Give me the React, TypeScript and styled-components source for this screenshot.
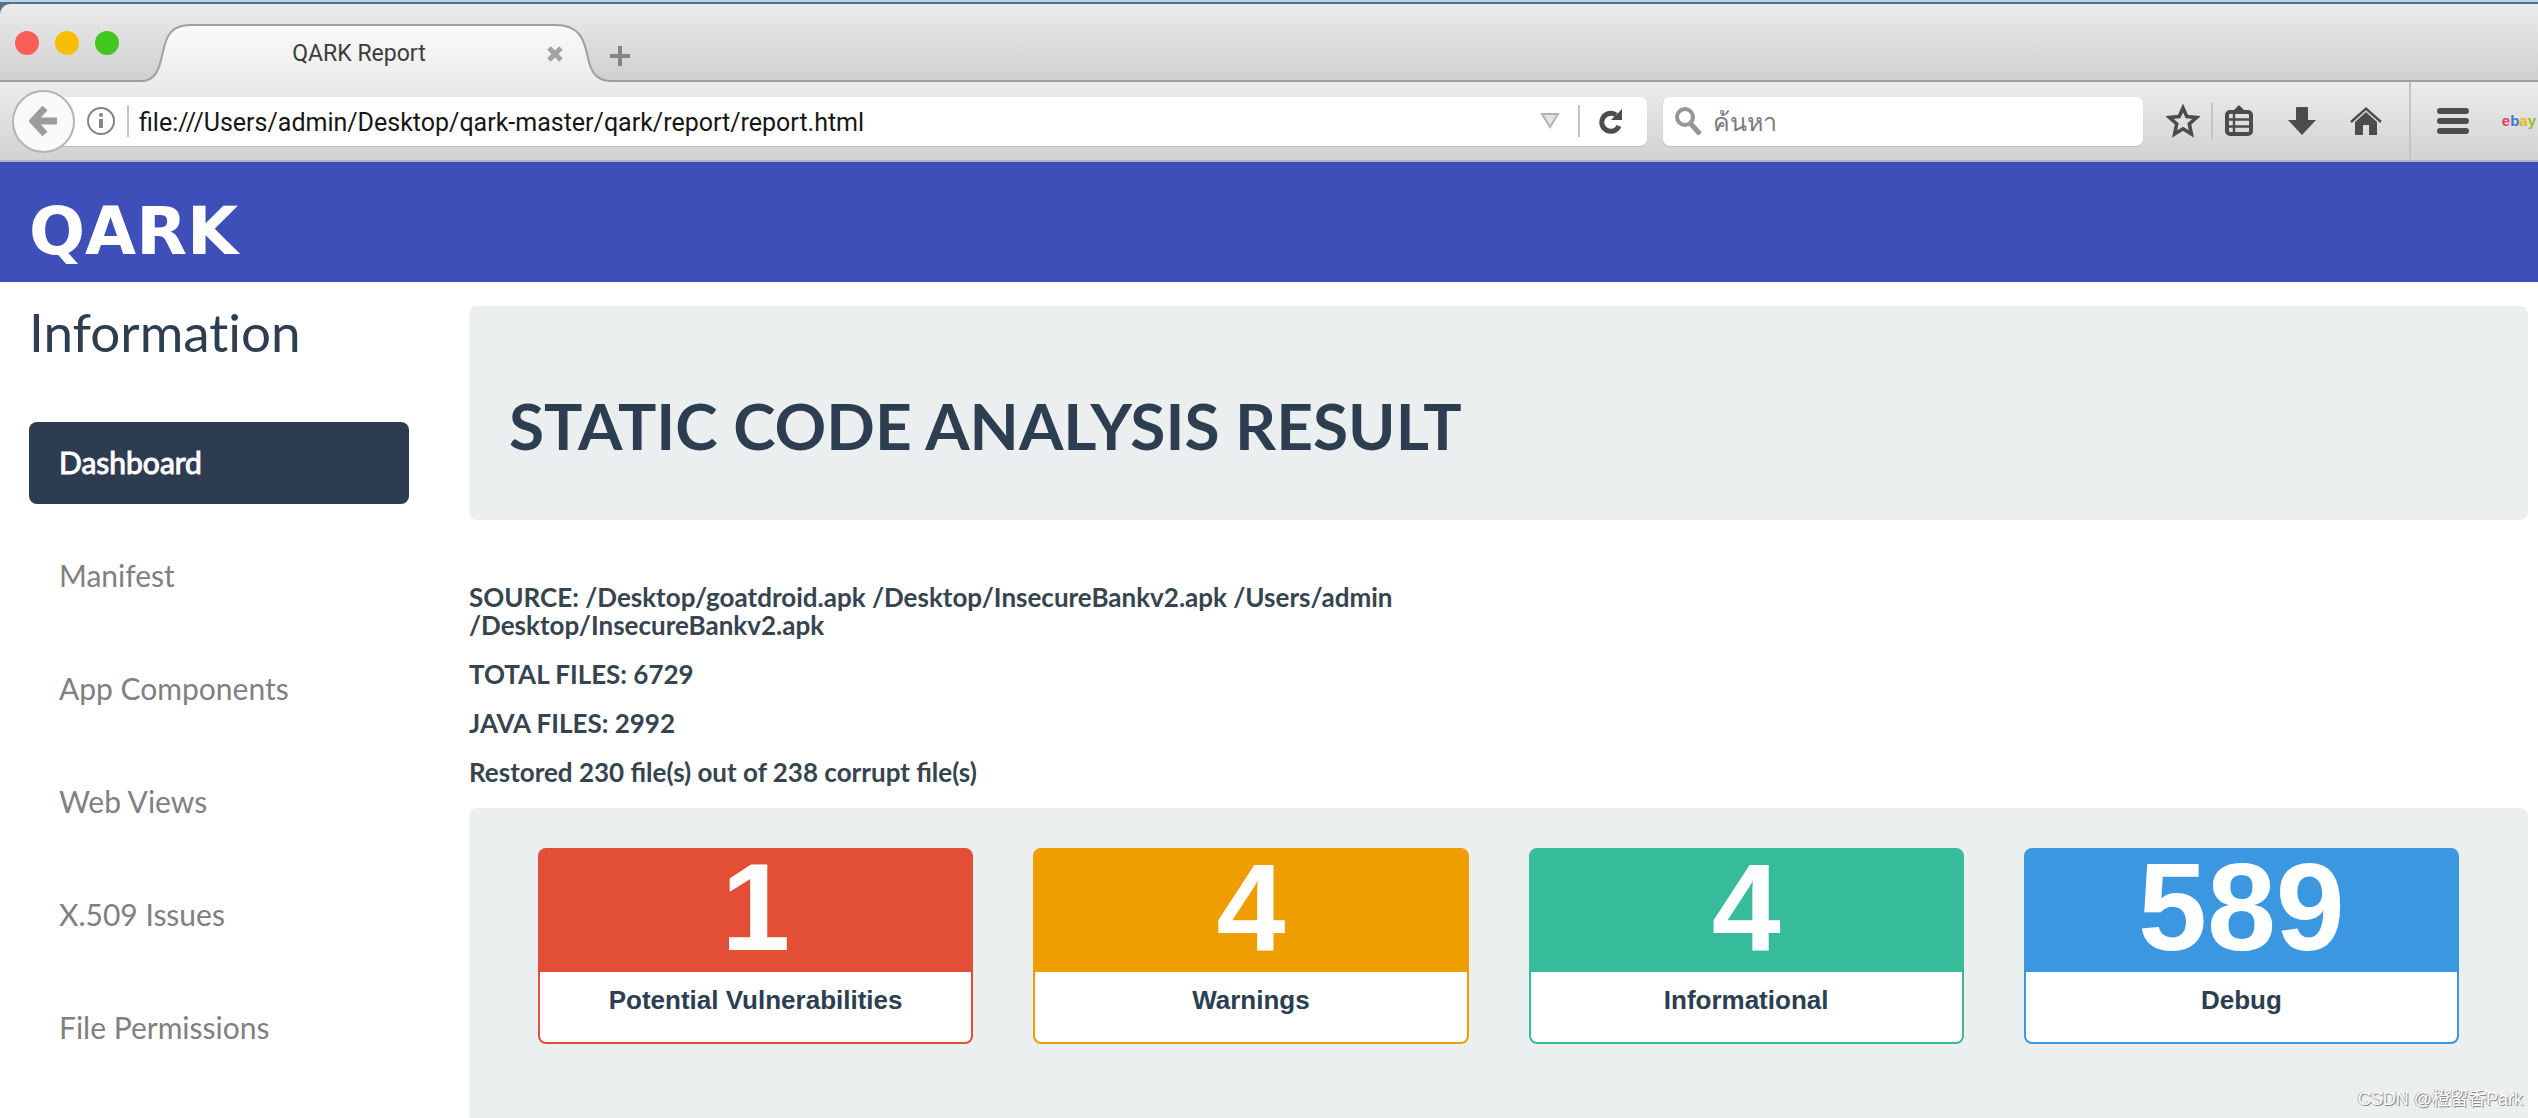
import React from "react";
import styled, { createGlobalStyle } from "styled-components";

const GlobalStyle = createGlobalStyle`
  *, *::before, *::after { box-sizing: border-box; }
  html, body { margin: 0; padding: 0; background: #ffffff; }
  body { font-family: Lato, "Liberation Sans", sans-serif; color: #2c3e50; overflow: hidden; }
  button { border: 0; padding: 0; background: none; font: inherit; color: inherit; }
  h1, h2, p, ul { margin: 0; padding: 0; }
`;

const Page = styled.div`
  display: flex;
  flex-direction: column;
  height: 100vh;
`;

/* ---- browser window ---- */

const Chrome = styled.header`
  flex: none;
  padding-top: 2px;
  border-top: 2px solid #bcd3ee;
  background: #55708a;
  font-family: Roboto, "Noto Sans", sans-serif;
`;

const TabStrip = styled.div`
  display: flex;
  align-items: flex-end;
  height: 78px;
  background: linear-gradient(#ebebeb, #cfcfcf);
  box-shadow: inset 0 -2px 0 #a0a0a0;
  border-top-left-radius: 10px;
`;

const WindowButtons = styled.div`
  display: flex;
  align-self: center;
  gap: 16px;
  width: 143px;
  padding-left: 15px;
`;

const WindowButton = styled.button<{ $color: string }>`
  width: 24px;
  height: 24px;
  border-radius: 50%;
  background: ${(p) => p.$color};
`;

const Tab = styled.div`
  position: relative;
  display: flex;
  align-items: center;
  width: 466px;
  height: 58px;
  padding: 2px 42px 0 32px;
`;

const TabShape = styled.svg`
  position: absolute;
  inset: 0;
`;

const TabTitle = styled.span`
  position: relative;
  flex: 1;
  text-align: center;
  font-size: 23px;
  line-height: 28px;
  color: #3c3c3c;
`;

const PlainButton = styled.button<{ $width?: number }>`
  position: relative;
  display: flex;
  align-items: center;
  justify-content: center;
  flex: none;
  width: ${(p) => p.$width ?? 22}px;
`;

const NewTab = styled(PlainButton)`
  height: 52px;
`;

const Toolbar = styled.div`
  display: flex;
  align-items: center;
  height: 80px;
  padding-left: 12px;
  background: linear-gradient(#ececec, #d2d2d2);
  border-bottom: 2px solid #b4b4c4;
`;

const BackButton = styled.button`
  position: relative;
  z-index: 1;
  display: flex;
  align-items: center;
  justify-content: center;
  flex: none;
  width: 63px;
  height: 63px;
  border: 2px solid #b4b4b4;
  border-radius: 50%;
  background: #fafafa;
`;

const AddressBar = styled.div`
  display: flex;
  align-items: center;
  flex: 1;
  height: 49px;
  margin-left: -12px;
  padding: 0 5px 0 23px;
  background: #ffffff;
  border-radius: 0 7px 7px 0;
  box-shadow: 0 1px 1px #bdbdbd;
`;

const Divider = styled.span<{ $height: number; $before?: number }>`
  flex: none;
  width: 2px;
  height: ${(p) => p.$height}px;
  margin-left: ${(p) => p.$before ?? 0}px;
  background: #c4c4c4;
`;

const TextField = styled.input`
  flex: 1;
  min-width: 0;
  height: 100%;
  padding: 2px 10px 0;
  border: 0;
  outline: 0;
  background: transparent;
  font-family: Roboto, "Noto Sans", sans-serif;
  font-size: 25px;
  color: #161616;
  &::placeholder { color: #7c7c7c; opacity: 1; }
`;

const SearchBar = styled.label`
  display: flex;
  align-items: center;
  flex: none;
  width: 19%;
  height: 49px;
  margin: 0 22px 0 16px;
  padding-left: 11px;
  background: #ffffff;
  border-radius: 7px;
  box-shadow: 0 1px 1px #bdbdbd;
`;

const Actions = styled.div`
  display: flex;
  align-items: center;
  height: 100%;
`;

const ActionGroup = styled.div`
  display: flex;
  align-items: center;
  gap: 33px;
  padding: 0 27px 0 11px;
`;

const MenuButton = styled(PlainButton)`
  margin-left: 25px;
`;

const EbayLink = styled.a`
  margin-left: 32px;
  padding-right: 2px;
  font-family: "Liberation Sans", sans-serif;
  font-size: 15px;
  font-weight: 700;
  line-height: 20px;
  text-decoration: none;
`;

const Tint = styled.span<{ $color: string }>`
  color: ${(p) => p.$color};
`;

/* ---- report ---- */

const Banner = styled.div`
  display: flex;
  align-items: center;
  flex: none;
  height: 120px;
  padding: 20px 29px 0;
  background: #3e4fb9;
`;

const Logo = styled.a`
  font-family: "DejaVu Sans", sans-serif;
  font-size: 66px;
  font-weight: 700;
  line-height: 66px;
  color: #ffffff;
  text-decoration: none;
`;

const Body = styled.div`
  display: flex;
  flex: 1;
  min-height: 0;
  padding: 24px 10px 0 29px;
`;

const Sidebar = styled.nav`
  flex: none;
  width: 380px;
  margin-right: 60px;
`;

const SidebarTitle = styled.h2`
  font-size: 53px;
  font-weight: 400;
  line-height: 52px;
  font-variant-ligatures: none;
`;

const Menu = styled.ul`
  display: flex;
  flex-direction: column;
  gap: 31px;
  margin-top: 64px;
  list-style: none;
`;

const MenuLink = styled.a<{ $active?: boolean }>`
  display: block;
  padding: 20px 30px 22px;
  border-radius: 8px;
  font-size: 30px;
  line-height: 40px;
  text-decoration: none;
  -webkit-text-stroke: ${(p) => (p.$active ? "1px #ffffff" : "0")};
  color: ${(p) => (p.$active ? "#ffffff" : "#808080")};
  background: ${(p) => (p.$active ? "#2e3c52" : "transparent")};
`;

const Main = styled.main`
  display: flex;
  flex-direction: column;
  flex: 1;
  min-width: 0;
`;

const Hero = styled.section`
  flex: none;
  padding: 80px 40px 54px;
  border-radius: 8px;
  background: #ebeff0;
`;

const HeroTitle = styled.h1`
  font-size: 64px;
  font-weight: 700;
  line-height: 80px;
`;

const Facts = styled.section`
  display: flex;
  flex-direction: column;
  gap: 21px;
  padding: 63px 0 22px;
  font-size: 26px;
  font-weight: 700;
  line-height: 28px;
  color: #36444f;
`;

const Summary = styled.section`
  display: grid;
  grid-template-columns: repeat(4, 1fr);
  align-items: start;
  gap: 60px;
  flex: 1;
  padding: 40px 69px 0;
  border-radius: 8px 8px 0 0;
  background: #ebeff0;
`;

const Card = styled.article<{ $color: string }>`
  border: 2px solid ${(p) => p.$color};
  border-radius: 8px;
  background: #ffffff;
  font-family: "Liberation Sans", sans-serif;
  font-weight: 700;
  text-align: center;
`;

const Count = styled.p<{ $color: string }>`
  padding-bottom: 8px;
  border-radius: 5px 5px 0 0;
  background: ${(p) => p.$color};
  color: #ffffff;
  font-size: 124px;
  line-height: 114px;
`;

const CardLabel = styled.p`
  padding: 13px 0 27px;
  font-size: 26px;
  line-height: 30px;
  color: #2c3e50;
`;

const Watermark = styled.span`
  position: absolute;
  right: 15px;
  bottom: 6px;
  font-family: "Liberation Sans", "Noto Sans CJK SC", sans-serif;
  font-size: 18px;
  line-height: 26px;
  color: #ffffff;
  text-shadow: 1px 1px 0 #8a8a8a, -1px 0 0 #b0b0b0;
`;

const ink = "#4c4c4c";

const menu = ["Dashboard", "Manifest", "App Components", "Web Views", "X.509 Issues", "File Permissions"];

const cards = [
  { label: "Potential Vulnerabilities", count: 1, color: "#e34e36" },
  { label: "Warnings", count: 4, color: "#ef9e00" },
  { label: "Informational", count: 4, color: "#37bc9b" },
  { label: "Debug", count: 589, color: "#3c97e1" },
];

function BrowserChrome() {
  return (
    <Chrome>
      <TabStrip>
        <WindowButtons>
          <WindowButton $color="#f95f57" aria-label="Close window" />
          <WindowButton $color="#fabd05" aria-label="Minimize window" />
          <WindowButton $color="#41c71d" aria-label="Zoom window" />
        </WindowButtons>
        <Tab>
          <TabShape width="466" height="58" viewBox="0 0 466 58" aria-hidden="true">
            <defs>
              <linearGradient id="tabFill" x1="0" y1="0" x2="0" y2="1">
                <stop offset="0" stopColor="#fafafa" />
                <stop offset="1" stopColor="#ececec" />
              </linearGradient>
            </defs>
            <path
              d="M0 58V57C12 56 16 46 19 32C23 12 27 1 48 1H412C436 1 441 14 445 34C448 48 453 56 466 57V58Z"
              fill="url(#tabFill)"
            />
            <path
              d="M0 57C12 56 16 46 19 32C23 12 27 1 48 1H412C436 1 441 14 445 34C448 48 453 56 466 57"
              fill="none"
              stroke="#a0a0a0"
              strokeWidth="2"
            />
          </TabShape>
          <TabTitle>QARK Report</TabTitle>
          <PlainButton aria-label="Close tab" $width={24}>
            <svg width="18" height="18" viewBox="0 0 18 18">
              <path d="M3 3L15 15M15 3L3 15" stroke="#a3a3a3" strokeWidth="5" />
            </svg>
          </PlainButton>
        </Tab>
        <NewTab aria-label="New tab">
          <svg width="22" height="22" viewBox="0 0 22 22">
            <path d="M11 1V21M1 11H21" stroke="#858585" strokeWidth="4" />
          </svg>
        </NewTab>
      </TabStrip>
      <Toolbar>
        <BackButton aria-label="Back">
          <svg width="30" height="32" viewBox="0 0 30 32">
            <path d="M16 3L4 16L16 29M5 16H28" fill="none" stroke="#9c9c9c" strokeWidth="7" />
          </svg>
        </BackButton>
        <AddressBar>
          <PlainButton aria-label="Site information" $width={30}>
            <svg width="30" height="30" viewBox="0 0 30 30">
              <circle cx="15" cy="15" r="13" fill="none" stroke="#858585" strokeWidth="2" />
              <path d="M15 13V22" stroke="#858585" strokeWidth="4" />
              <circle cx="15" cy="9" r="2" fill="#858585" />
            </svg>
          </PlainButton>
          <Divider $height={32} $before={11} />
          <TextField
            aria-label="Address"
            defaultValue="file:///Users/admin/Desktop/qark-master/qark/report/report.html"
          />
          <PlainButton aria-label="Show history" $width={28}>
            <svg width="20" height="16" viewBox="0 0 20 16">
              <path d="M2 1H18L10 14Z" fill="#e4e4e4" stroke="#b4b4b4" strokeWidth="2" />
            </svg>
          </PlainButton>
          <Divider $height={32} $before={14} />
          <PlainButton aria-label="Reload" $width={62}>
            <svg width="24" height="26" viewBox="0 0 24 26">
              <path d="M20 18A9 9 0 1 1 17 7" fill="none" stroke={ink} strokeWidth="5" />
              <path d="M23 1V12H12Z" fill={ink} />
            </svg>
          </PlainButton>
        </AddressBar>
        <SearchBar>
          <svg width="29" height="30" viewBox="0 0 29 30" aria-hidden="true">
            <circle cx="11" cy="11" r="8" fill="none" stroke="#969696" strokeWidth="4" />
            <path d="M17 18L26 28" stroke="#969696" strokeWidth="5" />
          </svg>
          <TextField aria-label="Search" placeholder="ค้นหา" />
        </SearchBar>
        <Actions>
          <PlainButton aria-label="Bookmark this page" $width={36}>
            <svg width="34" height="34" viewBox="0 0 34 34">
              <path
                d="M17 4L20.8 12.6L30.5 13.5L23.3 19.8L25.4 30L17 24.8L8.6 30L10.7 19.8L3.5 13.5L13.2 12.6Z"
                fill="none"
                stroke={ink}
                strokeWidth="3.6"
              />
            </svg>
          </PlainButton>
          <Divider $height={36} $before={10} />
          <ActionGroup>
            <PlainButton aria-label="Bookmarks" $width={30}>
              <svg width="30" height="32" viewBox="0 0 30 32">
                <path d="M9 6L15 0L21 6Z" fill={ink} />
                <rect x="3" y="7" width="24" height="22" rx="3" fill="none" stroke={ink} strokeWidth="4" />
                <path d="M4 14.5H26M4 21.5H26M10 8V28" stroke={ink} strokeWidth="2.4" />
              </svg>
            </PlainButton>
            <PlainButton aria-label="Downloads" $width={30}>
              <svg width="30" height="32" viewBox="0 0 30 32">
                <path d="M9 3Q9 2 10 2H20Q21 2 21 3V15H29L15 30L1 15H9Z" fill={ink} />
              </svg>
            </PlainButton>
            <PlainButton aria-label="Home" $width={32}>
              <svg width="32" height="32" viewBox="0 0 32 32">
                <path d="M1 17L16 3.5L31 17" fill="none" stroke={ink} strokeWidth="2.4" />
                <path d="M16 7L27 17V30H19V20H13V30H5V17Z" fill={ink} />
              </svg>
            </PlainButton>
          </ActionGroup>
          <Divider $height={78} />
          <MenuButton aria-label="Open menu" $width={34}>
            <svg width="34" height="28" viewBox="0 0 34 28">
              <path d="M4 4H30M4 14H30M4 24H30" stroke={ink} strokeWidth="6" strokeLinecap="round" />
            </svg>
          </MenuButton>
          <EbayLink href="#ebay">
            <Tint $color="#e0444f">e</Tint>
            <Tint $color="#3f74d6">b</Tint>
            <Tint $color="#efb41c">a</Tint>
            <Tint $color="#93bf22">y</Tint>
          </EbayLink>
        </Actions>
      </Toolbar>
    </Chrome>
  );
}

export default function App() {
  return (
    <Page>
      <GlobalStyle />
      <BrowserChrome />
      <Banner>
        <Logo href="#home">QARK</Logo>
      </Banner>
      <Body>
        <Sidebar>
          <SidebarTitle>Information</SidebarTitle>
          <Menu>
            {menu.map((item, i) => (
              <li key={item}>
                <MenuLink href={"#" + i} $active={i === 0}>
                  {item}
                </MenuLink>
              </li>
            ))}
          </Menu>
        </Sidebar>
        <Main>
          <Hero>
            <HeroTitle>STATIC CODE ANALYSIS RESULT</HeroTitle>
          </Hero>
          <Facts>
            <p>
              SOURCE: /Desktop/goatdroid.apk /Desktop/InsecureBankv2.apk /Users/admin
              <br />
              /Desktop/InsecureBankv2.apk
            </p>
            <p>TOTAL FILES: 6729</p>
            <p>JAVA FILES: 2992</p>
            <p>Restored 230 file(s) out of 238 corrupt file(s)</p>
          </Facts>
          <Summary>
            {cards.map((c) => (
              <Card key={c.label} $color={c.color}>
                <Count $color={c.color}>{c.count}</Count>
                <CardLabel>{c.label}</CardLabel>
              </Card>
            ))}
          </Summary>
        </Main>
      </Body>
      <Watermark>CSDN @橙留香Park</Watermark>
    </Page>
  );
}
